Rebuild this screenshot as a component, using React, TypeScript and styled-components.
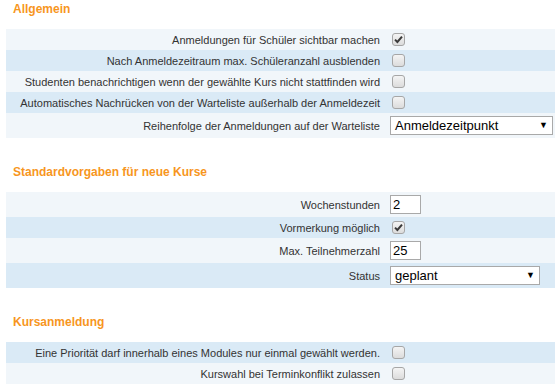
import React from "react";
import styled, { createGlobalStyle } from "styled-components";

const Global = createGlobalStyle`
  html, body { margin: 0; padding: 0; background: #fff; }
  body { font-family: "Liberation Sans", Arial, sans-serif; overflow: hidden; }
`;

const Page = styled.div`
  width: 555px;
  padding-left: 6px;
  box-sizing: border-box;
  display: flex;
  flex-direction: column;
  gap: 25px;
`;

const Section = styled.section`
  display: flex;
  flex-direction: column;
  gap: 11px;
`;

const Heading = styled.h3`
  margin: 0;
  padding-left: 7px;
  font-size: 12px;
  line-height: 18px;
  font-weight: bold;
  color: #f7961e;
`;

const Table = styled.div`
  display: flex;
  flex-direction: column;
  width: 560px;
`;

const Row = styled.div<{ $dark?: boolean; $h: number }>`
  display: grid;
  grid-template-columns: 378px 1fr;
  align-items: center;
  height: ${(p) => p.$h}px;
  background: ${(p) => (p.$dark ? "#daeaf6" : "#f1f6fa")};
`;

const Label = styled.div`
  text-align: right;
  padding-right: 4px;
  font-size: 11px;
  color: #333;
  white-space: nowrap;
`;

const Value = styled.div`
  display: flex;
  align-items: center;
  padding-left: 6px;
`;

const Box = styled.span`
  width: 13px;
  height: 13px;
  margin-left: 2px;
  box-sizing: border-box;
  border: 1px solid #a6a6a6;
  border-radius: 3px;
  background: linear-gradient(#f4f4f4, #dcdcdc);
  display: flex;
  align-items: center;
  justify-content: center;
`;

const TextInput = styled.div`
  width: 31px;
  height: 19px;
  box-sizing: border-box;
  border: 1px solid #a9a9a9;
  background: #fff;
  font-size: 13px;
  line-height: 17px;
  padding-left: 2px;
  color: #000;
`;

const Select = styled.div<{ $w: number }>`
  width: ${(p) => p.$w}px;
  height: 19px;
  box-sizing: border-box;
  border: 1px solid #a9a9a9;
  background: #fff;
  font-size: 13px;
  line-height: 17px;
  padding-left: 4px;
  padding-right: 4px;
  color: #000;
  display: flex;
  align-items: center;
  justify-content: space-between;
`;

const Arrow = styled.span`
  font-size: 9px;
  color: #000;
`;

const Check = ({ checked }: { checked?: boolean }) => (
  <Box>
    {checked && (
      <svg width="9" height="9" viewBox="0 0 9 9">
        <path d="M1 4.6 L3.4 7 L8 1.6" stroke="#3a3a3a" strokeWidth="2" fill="none" />
      </svg>
    )}
  </Box>
);

type Ctl =
  | { kind: "check"; checked?: boolean }
  | { kind: "input"; value: string }
  | { kind: "select"; value: string; width: number };

type RowData = { label: string; ctl: Ctl; dark?: boolean; h: number };

const sections: { title: string; rows: RowData[] }[] = [
  {
    title: "Allgemein",
    rows: [
      { label: "Anmeldungen für Schüler sichtbar machen", ctl: { kind: "check", checked: true }, h: 21 },
      { label: "Nach Anmeldezeitraum max. Schüleranzahl ausblenden", ctl: { kind: "check" }, dark: true, h: 21 },
      { label: "Studenten benachrichtigen wenn der gewählte Kurs nicht stattfinden wird", ctl: { kind: "check" }, h: 21 },
      { label: "Automatisches Nachrücken von der Warteliste außerhalb der Anmeldezeit", ctl: { kind: "check" }, dark: true, h: 21 },
      { label: "Reihenfolge der Anmeldungen auf der Warteliste", ctl: { kind: "select", value: "Anmeldezeitpunkt", width: 163 }, h: 25 },
    ],
  },
  {
    title: "Standardvorgaben für neue Kurse",
    rows: [
      { label: "Wochenstunden", ctl: { kind: "input", value: "2" }, h: 25 },
      { label: "Vormerkung möglich", ctl: { kind: "check", checked: true }, dark: true, h: 21 },
      { label: "Max. Teilnehmerzahl", ctl: { kind: "input", value: "25" }, h: 25 },
      { label: "Status", ctl: { kind: "select", value: "geplant", width: 150 }, dark: true, h: 25 },
    ],
  },
  {
    title: "Kursanmeldung",
    rows: [
      { label: "Eine Priorität darf innerhalb eines Modules nur einmal gewählt werden.", ctl: { kind: "check" }, dark: true, h: 21 },
      { label: "Kurswahl bei Terminkonflikt zulassen", ctl: { kind: "check" }, h: 21 },
    ],
  },
];

const Control = ({ ctl }: { ctl: Ctl }) => {
  if (ctl.kind === "check") return <Check checked={ctl.checked} />;
  if (ctl.kind === "input") return <TextInput>{ctl.value}</TextInput>;
  return (
    <Select $w={ctl.width}>
      <span>{ctl.value}</span>
      <Arrow>▼</Arrow>
    </Select>
  );
};

export default function App() {
  return (
    <>
      <Global />
      <Page>
        {sections.map((s) => (
          <Section key={s.title}>
            <Heading>{s.title}</Heading>
            <Table>
              {s.rows.map((r) => (
                <Row key={r.label} $dark={r.dark} $h={r.h}>
                  <Label>{r.label}</Label>
                  <Value>
                    <Control ctl={r.ctl} />
                  </Value>
                </Row>
              ))}
            </Table>
          </Section>
        ))}
      </Page>
    </>
  );
}
